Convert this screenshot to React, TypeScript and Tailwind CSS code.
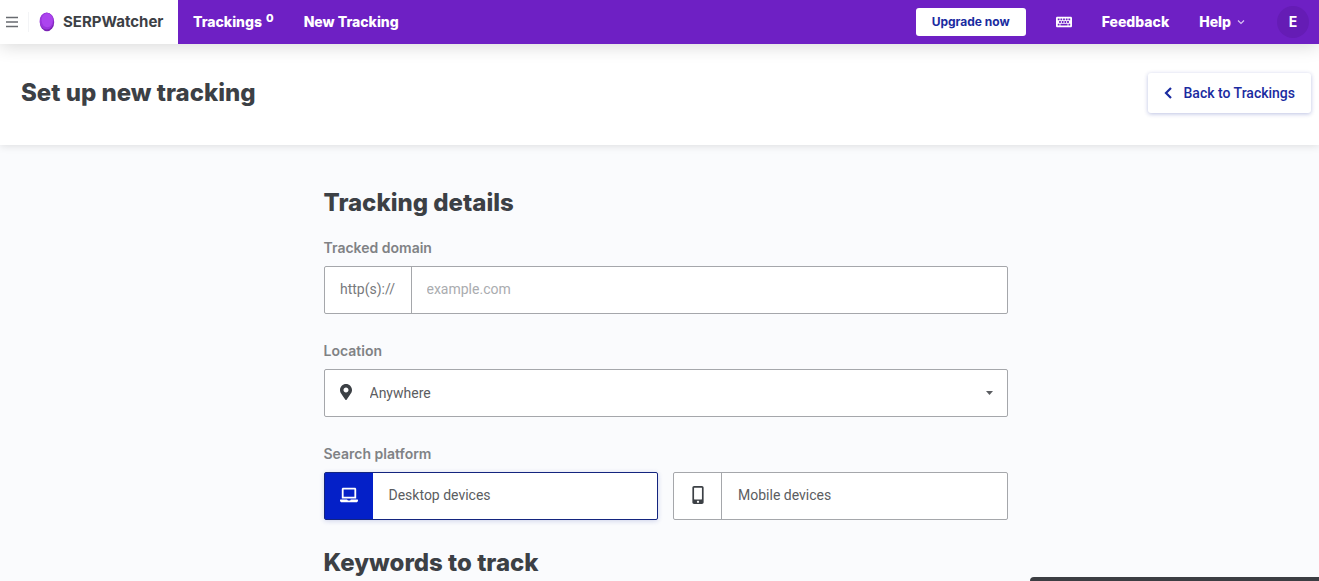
import { useState } from "react";
import {
  FaKeyboard,
  FaLaptop,
  FaMapMarkerAlt,
  FaMobileAlt,
} from "react-icons/fa";

const platforms = [
  { id: "desktop", label: "Desktop devices", icon: FaLaptop },
  { id: "mobile", label: "Mobile devices", icon: FaMobileAlt },
];

function Logo() {
  return (
    <svg className="h-5 w-4" viewBox="0 0 16 20" aria-hidden="true">
      <ellipse cx="8" cy="10" rx="7.2" ry="9.2" fill="#7a22b4" />
      <ellipse cx="7.6" cy="9" rx="7" ry="8.6" fill="#9a35dc" />
      <ellipse cx="8.2" cy="8.2" rx="5.6" ry="7" fill="#ac44ee" />
    </svg>
  );
}

function Navbar() {
  return (
    <header className="relative flex h-11 items-stretch bg-[#6e20c4] text-sm font-extrabold text-white shadow-[0_2px_18px_rgba(0,0,0,0.16)]">
      <div className="flex w-[178px] items-center bg-white pl-1.5 text-[#3c4045]">
        <button type="button" aria-label="Menu">
          <svg
            className="h-3 w-3"
            viewBox="0 0 12 12"
            stroke="#686b70"
            strokeWidth="1.4"
          >
            <path d="M0 1.5h12M0 6h12M0 10.5h12" />
          </svg>
        </button>
        <div className="mr-2.5 ml-2.5 h-5 w-px bg-gray-100" />
        <Logo />
        <a href="#" className="ml-2 text-[15px] font-bold">
          SERPWatcher
        </a>
      </div>
      <nav className="flex flex-1 items-center pl-[15px]">
        <a href="#" className="flex gap-1">
          Trackings <span className="-mt-1 text-[11px] leading-5">0</span>
        </a>
        <a href="#" className="ml-[30px]">
          New Tracking
        </a>
      </nav>
      <div className="flex items-center pr-2.5">
        <button
          type="button"
          className="h-7 w-[110px] rounded-[3px] bg-white text-xs font-bold text-[#1a2ba0]"
        >
          Upgrade now
        </button>
        <button type="button" aria-label="Shortcuts" className="ml-[30px]">
          <FaKeyboard size={16} />
        </button>
        <a href="#" className="ml-[30px]">
          Feedback
        </a>
        <button type="button" className="ml-[30px] flex items-center gap-1.5">
          Help
          <svg
            className="h-2 w-2"
            viewBox="0 0 8 8"
            fill="none"
            stroke="#d9c3f3"
            strokeWidth="1.2"
          >
            <path d="M1 2.5l3 3 3-3" />
          </svg>
        </button>
        <button
          type="button"
          className="ml-8 h-8 w-8 rounded-full bg-[#651cb5] text-sm font-bold"
        >
          E
        </button>
      </div>
    </header>
  );
}

export default function App() {
  const [domain, setDomain] = useState("");
  const [platform, setPlatform] = useState("desktop");

  return (
    <div className="min-h-screen bg-[#fafbfd] font-['Inter',sans-serif] text-[#3c4045]">
      <Navbar />
      <div className="flex h-[101px] items-center justify-between bg-white pr-2 pb-1 pl-[21px] shadow-[0_1px_8px_rgba(0,0,0,0.12)]">
        <h1 className="text-2xl font-extrabold">Set up new tracking</h1>
        <a
          href="#"
          className="flex h-10 items-center gap-3 rounded-[3px] bg-white px-4 font-['Roboto',sans-serif] text-sm font-medium text-[#1a2ba0] shadow-[0_1px_4px_rgba(30,50,160,0.3)]"
        >
          <svg
            className="h-3 w-2"
            viewBox="0 0 8 12"
            fill="none"
            stroke="currentColor"
            strokeWidth="2.2"
          >
            <path d="M7 1L2 6l5 5" />
          </svg>
          Back to Trackings
        </a>
      </div>

      <main className="pl-3">
        <form
          className="mx-auto max-w-[684px] pt-10"
          onSubmit={(e) => e.preventDefault()}
        >
          <h2 className="text-2xl leading-9 font-extrabold">
            Tracking details
          </h2>

          <label
            htmlFor="domain"
            className="mt-[17px] block text-sm leading-5 font-semibold text-[#808285]"
          >
            Tracked domain
          </label>
          <div className="mt-2 flex h-12 rounded-[2px] border border-[#a5a7ab] bg-white font-['Roboto',sans-serif] text-sm">
            <span className="flex w-[87px] items-center justify-center border-r border-[#a5a7ab] pb-0.5 text-[#77797c]">
              http(s)://
            </span>
            <input
              id="domain"
              type="text"
              placeholder="example.com"
              value={domain}
              onChange={(e) => setDomain(e.target.value)}
              className="min-w-0 flex-1 px-[15px] pb-0.5 outline-none placeholder:text-[#aaacaf]"
            />
          </div>

          <label
            htmlFor="location"
            className="mt-[27px] block text-sm leading-5 font-semibold text-[#808285]"
          >
            Location
          </label>
          <div className="relative mt-2 font-['Roboto',sans-serif] text-sm">
            <select
              id="location"
              className="h-12 w-full appearance-none rounded-[2px] border border-[#a5a7ab] bg-white pl-[45px] text-[#5b5d61] outline-none"
            >
              <option>Anywhere</option>
            </select>
            <FaMapMarkerAlt
              size={16}
              className="pointer-events-none absolute top-[15px] left-3.5"
            />
            <svg
              className="pointer-events-none absolute top-[22px] right-[15px] h-1 w-[7px]"
              viewBox="0 0 7 4"
              fill="#5b5d61"
            >
              <path d="M0 0h7L3.5 4z" />
            </svg>
          </div>

          <fieldset className="mt-[27px]">
            <legend className="text-sm leading-5 font-semibold text-[#808285]">
              Search platform
            </legend>
            <div className="mt-2 grid grid-cols-2 gap-[15px] font-['Roboto',sans-serif] text-sm text-[#5b5d61]">
              {platforms.map(({ id, label, icon: Icon }) => (
                <label
                  key={id}
                  className={
                    platform === id
                      ? "relative flex h-12 cursor-pointer rounded-[2px] border border-[#14257f] bg-white shadow-[0_1px_5px_rgba(30,50,160,0.2)]"
                      : "relative flex h-12 cursor-pointer rounded-[2px] border border-[#a5a7ab] bg-white"
                  }
                >
                  <input
                    type="radio"
                    name="platform"
                    value={id}
                    checked={platform === id}
                    onChange={() => setPlatform(id)}
                    className="sr-only"
                  />
                  <span
                    className={
                      platform === id
                        ? "flex w-12 items-center justify-center bg-[#0420c8] pb-0.5 text-white"
                        : "flex w-12 items-center justify-center border-r border-[#a5a7ab] pb-0.5 text-[#3c4045]"
                    }
                  >
                    <Icon size={18} />
                  </span>
                  <span className="flex items-center pb-0.5 pl-4">{label}</span>
                </label>
              ))}
            </div>
          </fieldset>

          <h2 className="mt-[25px] text-2xl leading-9 font-extrabold">
            Keywords to track
          </h2>
        </form>
      </main>

      {/* top edge of the collapsed chat bar */}
      <div className="fixed right-0 bottom-0 h-1 w-[289px] rounded-tl-md bg-[#3c3e43]" />
    </div>
  );
}
